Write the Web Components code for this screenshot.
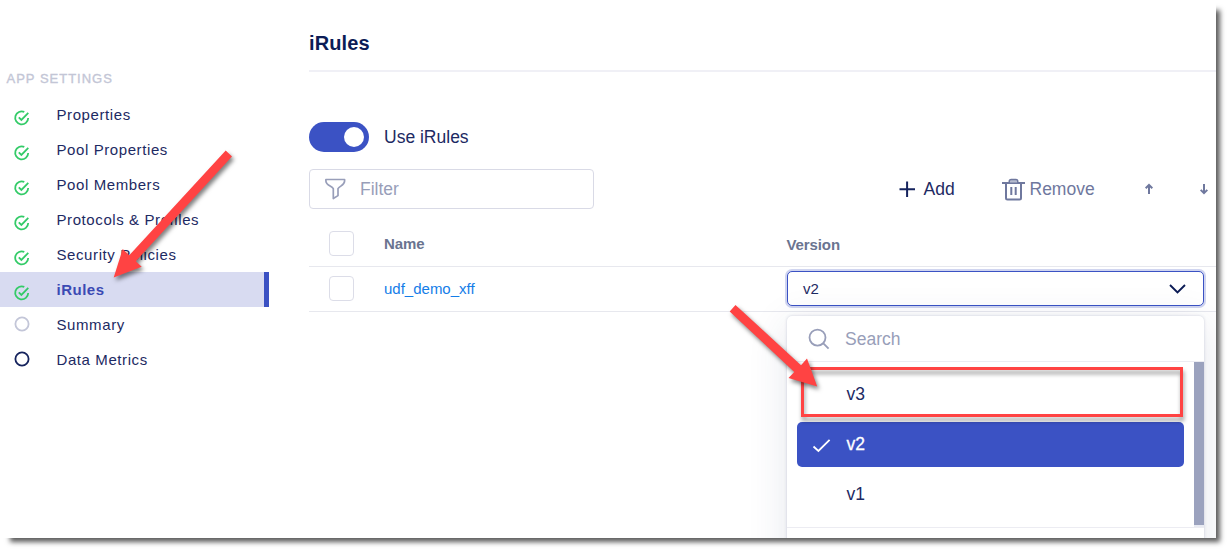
<!DOCTYPE html>
<html lang="en">
<head>
<meta charset="utf-8">
<title>iRules</title>
<style>
html,body{margin:0;background:#fff;overflow:hidden}
body{font-family:"Liberation Sans",Arial,sans-serif;color:#1d2a63;width:1231px;height:553px}
</style>
</head>
<body>
<app-window></app-window>
<script>
const define = (name, html, setup) => {
  const template = document.createElement('template');
  template.innerHTML = html;
  customElements.define(name, class extends HTMLElement {
    constructor() {
      super();
      this.attachShadow({mode: 'open'}).append(template.content.cloneNode(true));
    }
    connectedCallback() { if (setup) setup(this, this.shadowRoot); }
  });
};

define('state-icon', `
<style>
:host{display:block;width:16px;height:16px;padding-bottom:1px}
svg{display:none;width:16px;height:16px;overflow:visible;fill:none}
:host([state=done]){padding:6px 0 0}
:host([state=done]) .done,:host([state=idle]) .ring,:host([state=ready]) .ring{display:block}
.done{stroke:#34cb68;stroke-width:1.8}
.ring{stroke:#c3c6d8;stroke-width:1.8}
:host([state=ready]) .ring{stroke:#15235d}
</style>
<svg class="done" viewBox="0 0 16 16"><path d="M10.300 1.900A6.500 6.500 0 1 0 14.200 8"/><path d="M4.800 7.300 7.400 9.900 14.300 2.800"/></svg>
<svg class="ring" viewBox="0 0 16 16"><circle cx="8" cy="8" r="6.600"/></svg>`);

define('nav-item', `
<style>
:host{display:flex;align-items:center;height:35px;width:269px;box-sizing:border-box;padding-left:14px;font-size:15px;letter-spacing:.59px}
:host([active]){background:#d8dbf1;border-right:5px solid #3b51c3;color:#3b4ab4;font-weight:bold;letter-spacing:.5px}
state-icon{margin-right:26.500px}
</style>
<state-icon></state-icon><slot></slot>`,
(host, root) => root.querySelector('state-icon').setAttribute('state', host.getAttribute('state') || 'done'));

define('app-nav', `
<style>
:host{display:block;width:309px;padding-top:70px}
h2{margin:0 0 9px 6.500px;font-size:13px;line-height:18px;font-weight:normal;-webkit-text-stroke:.35px #c3c6d6;letter-spacing:1px;color:#c3c6d6}
</style>
<h2>APP SETTINGS</h2>
<slot></slot>`);

define('toggle-switch', `
<style>
:host{display:flex;align-items:center;height:30px;font-size:17.500px}
i{display:flex;justify-content:flex-end;width:60px;height:30px;box-sizing:border-box;padding:5px;border-radius:15px;background:#3b52c4;margin-right:15px}
i::after{content:"";width:20px;height:20px;border-radius:50%;background:#fff}
</style>
<i></i><slot></slot>`);

define('check-box', `
<style>:host{display:block;box-sizing:border-box;width:25px;height:25px;border:1px solid #dcdde8;border-radius:4px;background:#fff}</style>`);

define('tool-bar', `
<style>
:host{display:flex;align-items:center;height:40px;font-size:17.500px}
.filter{display:flex;align-items:center;box-sizing:border-box;width:285px;height:40px;border:1px solid #d9dae6;border-radius:4px;padding-left:15px;color:#989eb9;margin-right:303.500px}
.filter svg{margin-right:14px}
svg{display:block;fill:none;flex:none}
.add{display:flex;align-items:center;width:104.500px}
.remove{display:flex;align-items:center;color:#6f789e;width:139.500px}
.up{margin-right:41px}
</style>
<div class="filter"><svg width="21" height="22" viewBox="0 0 21 22" stroke="#989eb9" stroke-width="1.700" stroke-linejoin="round"><path d="M.9 1.500h18.700V3c0 4.400-5.100 4.900-6.600 7.600v7l-4.700 2.900v-9.900C6.800 7.900.9 7.400.9 3Z"/></svg>Filter</div>
<div class="add"><svg width="26" height="18" viewBox="0 0 26 18" stroke="#15235d" stroke-width="2"><path d="M1.500 9.300h15.500M9.100 1.500v15.500"/></svg>Add</div>
<div class="remove"><svg style="margin-right:4.500px" width="23" height="24" viewBox="0 0 23 24" stroke="#6f789e" stroke-width="2"><path d="M0 6h23M4 6v15q0 1.500 1.500 1.500h12q1.500 0 1.500-1.500V6M7.500 6V4.500q0-1.700 1.700-1.700h4.600q1.700 0 1.700 1.700V6M9.300 10v8M13.700 10v8"/><path d="M8 4.500h7" stroke="#b7bccf"/></svg>Remove</div>
<svg class="up" width="14" height="14" viewBox="0 0 14 14" stroke="#6f789e" stroke-width="2"><path d="M7 12V3M3.700 6.300 7 3l3.300 3.300"/></svg>
<svg width="14" height="14" viewBox="0 0 14 14" stroke="#6f789e" stroke-width="2"><path d="M7 2v9M3.700 7.900 7 11.200l3.300-3.300"/></svg>`);

define('list-option', `
<style>
:host{display:flex;align-items:center;box-sizing:border-box;width:387px;height:45px;border-radius:5px;padding-left:14px;font-size:17.500px;margin-bottom:5px}
:host([selected]){background:#3b52c4;color:#fff;-webkit-text-stroke:.3px #fff}
svg{width:20px;height:20px;margin-right:15.500px;visibility:hidden;fill:none;stroke:#fff;stroke-width:1.800}
:host([selected]) svg{visibility:visible}
</style>
<svg viewBox="0 0 20 20"><path d="M2.500 11.500 7.400 16 18.600 4.800"/></svg><slot></slot>`);

define('version-select', `
<style>
:host{display:block;position:relative;width:417px}
.field{display:flex;align-items:center;justify-content:space-between;box-sizing:border-box;height:35px;border:1px solid #3b52c4;border-radius:5px;box-shadow:0 0 0 2px #d0d5f0;padding:0 17px 0 15px;font-size:15px;background:#fff}
.menu{position:absolute;top:45px;left:0;width:417px;height:260px;background:#fff;border-radius:5px 5px 0 0;box-shadow:0 0 3px rgba(40,55,110,.22),0 8px 40px rgba(40,55,110,.12)}
.search{display:flex;align-items:center;height:45px;border-bottom:1px solid #ececf2;padding-left:21px;font-size:17.500px;color:#989eb9}
.search svg{margin-right:15px}
.search span{padding-top:2px}
.list{display:flex;justify-content:space-between;height:165px;border-bottom:1px solid #ececf2}
.options{padding:10px 0 0 10px}
.thumb{width:10px;height:163px;background:#9ba2be;box-shadow:0 2px #e8eaf2}
</style>
<div class="field">v2<svg width="17" height="12" viewBox="0 0 17 12" fill="none" stroke="#0c1c56" stroke-width="1.900"><path d="m1 2 7.500 7.500L16 2"/></svg></div>
<div class="menu">
<div class="search"><svg width="22" height="22" viewBox="0 0 22 22" fill="none" stroke="#989eb9" stroke-width="1.800"><circle cx="9.500" cy="9.600" r="8"/><path d="m15.100 15.200 5.500 5.500"/></svg><span>Search</span></div>
<div class="list"><div class="options"><list-option>v3</list-option><list-option selected>v2</list-option><list-option>v1</list-option></div><div class="thumb"></div></div>
</div>`);

define('rule-table', `
<style>
:host{display:block;margin-top:13px;font-size:15px}
.row{display:grid;grid-template-columns:55px 403px 1fr;align-items:center;height:43px;border-bottom:1px solid #e7e8ee;padding:0 0 1px 20px}
.head{color:#6a7490;font-weight:bold}
.head span:nth-child(2){letter-spacing:-.1px}
.head span:last-child{padding-top:2px;letter-spacing:-.1px;margin-left:-.5px}
a{color:#147de8}
</style>
<div class="row head"><check-box></check-box><span>Name</span><span>Version</span></div>
<div class="row"><check-box></check-box><a>udf_demo_xff</a><version-select></version-select></div>`);

define('rules-panel', `
<style>
:host{display:block;width:907px}
h1{margin:0 0 50px;height:72px;border-bottom:2px solid #f0f0f6;font-size:20px;line-height:24px;padding-top:31px;box-sizing:border-box;color:#0c1c56;letter-spacing:.1px}
tool-bar{margin-top:17px}
</style>
<h1>iRules</h1>
<toggle-switch>Use iRules</toggle-switch>
<tool-bar></tool-bar>
<rule-table></rule-table>`);

define('callout-marks', `
<style>
:host{position:absolute;inset:0}
svg{display:block;overflow:visible}
g{filter:drop-shadow(2px 3px 2px rgba(0,0,0,.5))}
rect{filter:drop-shadow(1px 4px 2px rgba(0,0,0,.4))}
</style>
<svg width="1216" height="538" viewBox="0 0 1216 538">
<rect x="802.500" y="368.500" width="379" height="47" fill="none" stroke="#ff4343" stroke-width="3"/>
<g fill="#ff4343"><path d="M225.700 150.500 232 156.500 135.800 261.200 141.700 266.700 113.700 277.500 122.700 249 129.300 255.200Z"/>
<path d="M735.500 305 729.700 311.500 794.300 372 788.500 378 817.200 386.500 807 358.500 801 365.200Z"/></g>
</svg>`);

define('app-window', `
<style>
:host{display:block;position:relative;width:1216px;height:538px;background:#fff;box-shadow:7px 7px 5px -3px rgba(0,0,0,.64)}
.view{display:flex;position:relative;width:1216px;height:538px;overflow:hidden}
</style>
<div class="view">
<app-nav>
<nav-item>Properties</nav-item><nav-item>Pool Properties</nav-item><nav-item>Pool Members</nav-item><nav-item>Protocols &amp; Profiles</nav-item><nav-item>Security Policies</nav-item><nav-item active>iRules</nav-item><nav-item state="idle">Summary</nav-item><nav-item state="ready">Data Metrics</nav-item>
</app-nav>
<rules-panel></rules-panel>
<callout-marks></callout-marks>
</div>`);
</script>
</body>
</html>
